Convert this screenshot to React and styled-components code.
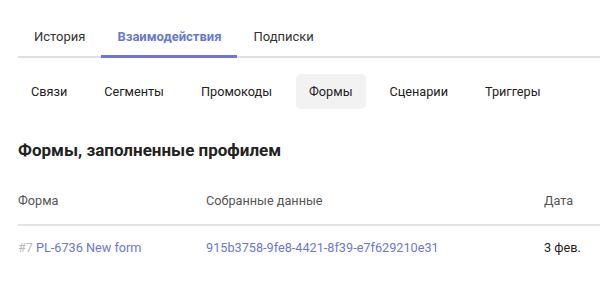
import React, { useState } from 'react';
import styled, { createGlobalStyle } from 'styled-components';

const GlobalStyle = createGlobalStyle`
  body {
    margin: 0;
    background: #ffffff;
    font-family: "Roboto", "Noto Sans", sans-serif;
    color: #222222;
  }
`;

const Page = styled.div`
  padding: 18px 8px 0 18px;
`;

const TabBar = styled.div`
  display: flex;
  border-bottom: 2px solid #e0e0e0;
  height: 38px;
`;

const Tab = styled.button`
  border: none;
  background: none;
  font-family: inherit;
  font-size: 13px;
  font-weight: ${(p) => (p.$active ? 700 : 400)};
  color: ${(p) => (p.$active ? '#6a79cf' : '#333333')};
  padding: 0 16px;
  margin-bottom: -2px;
  border-bottom: 3px solid ${(p) => (p.$active ? '#6a79cf' : 'transparent')};
  cursor: pointer;
`;

const SubTabs = styled.div`
  display: flex;
  gap: 11px;
  margin-top: 16px;
`;

const Pill = styled.button`
  border: none;
  border-radius: 5px;
  height: 35px;
  padding: 0 13px;
  font-family: inherit;
  font-size: 12.7px;
  color: #222222;
  background: ${(p) => (p.$active ? '#f2f2f2' : 'transparent')};
  cursor: pointer;
`;

const Heading = styled.h2`
  margin: 31px 0 0;
  font-size: 17px;
  font-weight: 700;
  color: #222222;
`;

const Table = styled.div`
  margin-top: 17px;
  font-size: 12.7px;
`;

const Row = styled.div`
  display: grid;
  grid-template-columns: 188px 1fr 56px;
  align-items: center;
  height: ${(p) => (p.$head ? '47px' : '43px')};
  border-bottom: ${(p) => (p.$head ? '2px solid #e4e4e4' : 'none')};
  color: ${(p) => (p.$head ? '#555555' : '#222222')};
`;

const Num = styled.span`
  color: #bbbbbb;
  margin-right: 3px;
`;

const Link = styled.a`
  color: #6a79cf;
  text-decoration: none;
`;

const mainTabs = ['История', 'Взаимодействия', 'Подписки'];
const subTabs = ['Связи', 'Сегменты', 'Промокоды', 'Формы', 'Сценарии', 'Триггеры'];

export default function App() {
  const [tab, setTab] = useState(1);
  const [sub, setSub] = useState(3);

  return (
    <Page>
      <GlobalStyle />
      <TabBar>
        {mainTabs.map((t, i) => (
          <Tab key={t} $active={i === tab} onClick={() => setTab(i)}>
            {t}
          </Tab>
        ))}
      </TabBar>
      <SubTabs>
        {subTabs.map((t, i) => (
          <Pill key={t} $active={i === sub} onClick={() => setSub(i)}>
            {t}
          </Pill>
        ))}
      </SubTabs>
      <Heading>Формы, заполненные профилем</Heading>
      <Table>
        <Row $head>
          <span>Форма</span>
          <span>Собранные данные</span>
          <span>Дата</span>
        </Row>
        <Row>
          <span>
            <Num>#7</Num>
            <Link href="#">PL-6736 New form</Link>
          </span>
          <span>
            <Link href="#">915b3758-9fe8-4421-8f39-e7f629210e31</Link>
          </span>
          <span>3 фев.</span>
        </Row>
      </Table>
    </Page>
  );
}
